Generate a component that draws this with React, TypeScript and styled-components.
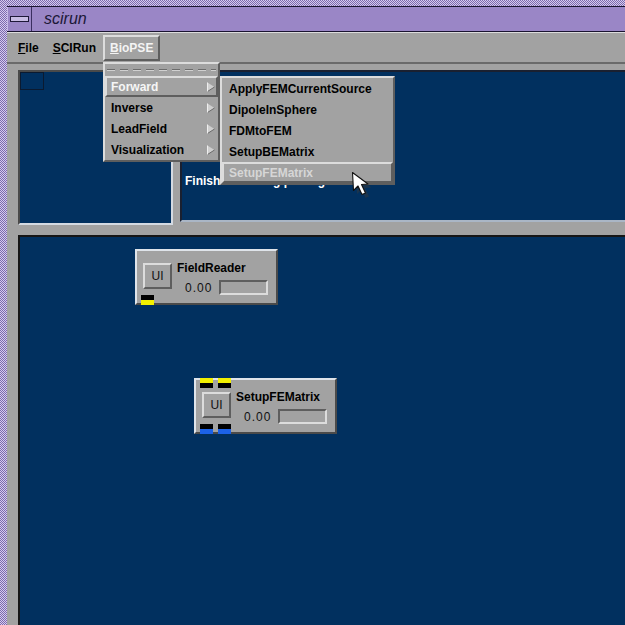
import React from "react";
import styled, { createGlobalStyle, css } from "styled-components";

const GRAY = "#a2a2a2";
const NAVY = "#01305f";
const LIGHT = "#dcdcdc";
const DARK = "#5e5e5e";

const GlobalStyle = createGlobalStyle`
  html, body {
    margin: 0;
    padding: 0;
    background: #8a78b8;
  }
  body {
    font-family: "Liberation Sans", Arial, sans-serif;
  }
`;

const raised = css`
  border-style: solid;
  border-color: ${LIGHT} ${DARK} ${DARK} ${LIGHT};
`;

const sunken = css`
  border-style: solid;
  border-color: ${DARK} ${LIGHT} ${LIGHT} ${DARK};
`;

const Screen = styled.div`
  position: relative;
  width: 625px;
  height: 625px;
  overflow: hidden;
  box-sizing: border-box;
  padding: 6px 0 0 7px;
  display: flex;
  flex-direction: column;
  background: repeating-conic-gradient(#d6cbee 0 25%, #7c6aae 0 50%) 0 0 / 2px 2px;
`;

const TitleBar = styled.div`
  height: 26px;
  box-sizing: border-box;
  display: flex;
  align-items: stretch;
  background: #9a86c6;
  border-top: 1px solid #1a1430;
  border-bottom: 1px solid #1a1430;
`;

const MinBox = styled.div`
  width: 25px;
  display: flex;
  align-items: center;
  justify-content: center;
  border-left: 1px solid #c4b8e2;
  border-right: 1px solid #3a2e60;
  box-sizing: border-box;
`;

const MinBar = styled.div`
  width: 17px;
  height: 4px;
  border: 1px solid #1e1838;
  background: #c8bce4;
`;

const Title = styled.div`
  margin-left: 12px;
  align-self: center;
  font-size: 16px;
  font-style: italic;
  color: #1c1838;
`;

const Window = styled.div`
  flex: 1;
  display: flex;
  flex-direction: column;
  background: ${GRAY};
  min-height: 0;
`;

const MenuBar = styled.div`
  height: 32px;
  box-sizing: border-box;
  display: flex;
  align-items: center;
  padding-left: 4px;
  border-top: 1px solid ${LIGHT};
  border-bottom: 2px solid #6a6a6a;
`;

const MenuButton = styled.div<{ $active?: boolean }>`
  height: 26px;
  box-sizing: border-box;
  display: flex;
  align-items: center;
  padding: 0 5px;
  border-width: 2px;
  font-size: 12px;
  font-weight: bold;
  color: ${(p) => (p.$active ? "#f4f4f4" : "#000")};
  ${(p) =>
    p.$active
      ? raised
      : css`
          border-style: solid;
          border-color: transparent;
        `}
`;

const PanelRow = styled.div`
  display: flex;
  align-items: flex-start;
  gap: 7px;
  margin-top: 6px;
  padding-left: 11px;
`;

const LeftPanel = styled.div`
  width: 155px;
  height: 155px;
  box-sizing: border-box;
  border-width: 2px;
  ${sunken};
  border-color: #4a4a4a #d4dae2 #d4dae2 #4a4a4a;
  background: ${NAVY};
`;

const Thumb = styled.div`
  width: 24px;
  height: 18px;
  box-sizing: border-box;
  border: 1px solid #0b1a30;
`;

const RightPanel = styled.div`
  flex: 1;
  height: 152px;
  box-sizing: border-box;
  border-width: 2px;
  ${sunken};
  border-color: #1a2030 #aab6c6 #aab6c6 #1a2030;
  border-right: none;
  background: ${NAVY};
  padding: 102px 3px 0;
`;

const StatusText = styled.div`
  font-size: 12px;
  font-weight: bold;
  line-height: 14px;
  color: #fff;
`;

const Canvas = styled.div`
  position: relative;
  flex: 1;
  margin: 10px 0 0 11px;
  border-top: 2px solid #161616;
  border-left: 2px solid #161616;
  background: ${NAVY};
`;

const Dropdown = styled.div<{ $left: number; $top: number; $width: number }>`
  position: absolute;
  left: ${(p) => p.$left}px;
  top: ${(p) => p.$top}px;
  width: ${(p) => p.$width}px;
  box-sizing: border-box;
  background: ${GRAY};
  border-width: 2px;
  ${raised};
  display: flex;
  flex-direction: column;
`;

const TearOff = styled.div`
  height: 12px;
  display: flex;
  flex-direction: column;
  justify-content: center;
  padding: 0 2px;
  &::before {
    content: "";
    height: 1px;
    background: repeating-linear-gradient(to right, #6c6c6c 0 8px, transparent 8px 13px);
  }
  &::after {
    content: "";
    height: 1px;
    background: repeating-linear-gradient(to right, #d0d0d0 0 8px, transparent 8px 13px);
  }
`;

const MenuItem = styled.div<{ $active?: boolean; $pad: number; $hi?: string }>`
  height: 21px;
  box-sizing: border-box;
  display: flex;
  align-items: center;
  justify-content: space-between;
  padding: 0 1px 0 ${(p) => p.$pad}px;
  border-width: 2px;
  font-size: 12px;
  font-weight: bold;
  color: ${(p) => (p.$active ? p.$hi || "#f6f6f6" : "#000")};
  ${(p) =>
    p.$active
      ? raised
      : css`
          border-style: solid;
          border-color: transparent;
        `}
`;

const Arrow = () => (
  <svg width="8" height="10" viewBox="0 0 8 10">
    <path d="M0.5 0.5 L7.5 5 L0.5 9.5 Z" fill="#cfcfcf" />
    <path d="M0.5 9.5 L7.5 5" stroke="#6a6a6a" strokeWidth="1" />
    <path d="M0.5 0.5 L0.5 9.5" stroke="#eeeeee" strokeWidth="1" />
  </svg>
);

const Cursor = styled.svg`
  position: absolute;
  left: 350px;
  top: 170px;
`;

const Module = styled.div<{ $left: number; $top: number }>`
  position: absolute;
  left: ${(p) => p.$left}px;
  top: ${(p) => p.$top}px;
  width: 143px;
  box-sizing: border-box;
  background: ${GRAY};
  border-width: 2px;
  ${raised};
  border-color: #dfe4ea #4a4a4a #4a4a4a #dfe4ea;
  padding: 10px 6px 8px;
  display: flex;
  align-items: flex-start;
  gap: 5px;
`;

const UIButton = styled.div`
  width: 29px;
  height: 26px;
  margin-top: 2px;
  box-sizing: border-box;
  border-width: 2px;
  ${raised};
  display: flex;
  align-items: center;
  justify-content: center;
  font-size: 12px;
  color: #111;
`;

const ModuleInfo = styled.div`
  display: flex;
  flex-direction: column;
`;

const ModuleName = styled.div`
  font-size: 12px;
  font-weight: bold;
  line-height: 14px;
  color: #000;
`;

const ValueRow = styled.div`
  display: flex;
  align-items: center;
  gap: 7px;
  margin-top: 5px;
  padding-left: 8px;
`;

const Value = styled.div`
  width: 27px;
  font-size: 12px;
  letter-spacing: 1px;
  color: #111;
`;

const Progress = styled.div`
  width: 49px;
  height: 15px;
  box-sizing: border-box;
  border-width: 2px;
  ${sunken};
`;

const Port = styled.div<{ $x: number; $edge: "top" | "bottom"; $color: string }>`
  position: absolute;
  left: ${(p) => p.$x}px;
  ${(p) => (p.$edge === "top" ? "top: -2px;" : "bottom: -2px;")}
  width: 13px;
  height: 10px;
  display: flex;
  flex-direction: ${(p) => (p.$edge === "top" ? "column" : "column-reverse")};
  &::before {
    content: "";
    height: 5px;
    background: ${(p) => p.$color};
  }
  &::after {
    content: "";
    height: 5px;
    background: #000;
  }
`;

const bioItems = ["Forward", "Inverse", "LeadField", "Visualization"];
const forwardItems = [
  "ApplyFEMCurrentSource",
  "DipoleInSphere",
  "FDMtoFEM",
  "SetupBEMatrix",
  "SetupFEMatrix",
];

export default function App() {
  return (
    <>
      <GlobalStyle />
      <Screen>
        <TitleBar>
          <MinBox>
            <MinBar />
          </MinBox>
          <Title>scirun</Title>
        </TitleBar>
        <Window>
          <MenuBar>
            <MenuButton>
              <span>
                <u>F</u>ile
              </span>
            </MenuButton>
            <MenuButton>
              <span>
                <u>S</u>CIRun
              </span>
            </MenuButton>
            <MenuButton $active>
              <span>
                <u>B</u>ioPSE
              </span>
            </MenuButton>
          </MenuBar>
          <PanelRow>
            <LeftPanel>
              <Thumb />
            </LeftPanel>
            <RightPanel>
              <StatusText>Finished loading packages</StatusText>
            </RightPanel>
          </PanelRow>
          <Canvas>
            <Module $left={115} $top={12}>
              <UIButton>UI</UIButton>
              <ModuleInfo>
                <ModuleName>FieldReader</ModuleName>
                <ValueRow>
                  <Value>0.00</Value>
                  <Progress />
                </ValueRow>
              </ModuleInfo>
              <Port $x={4} $edge="bottom" $color="#f2f000" />
            </Module>
            <Module $left={174} $top={141}>
              <UIButton>UI</UIButton>
              <ModuleInfo>
                <ModuleName>SetupFEMatrix</ModuleName>
                <ValueRow>
                  <Value>0.00</Value>
                  <Progress />
                </ValueRow>
              </ModuleInfo>
              <Port $x={4} $edge="top" $color="#f2f000" />
              <Port $x={22} $edge="top" $color="#f2f000" />
              <Port $x={4} $edge="bottom" $color="#1c62e8" />
              <Port $x={22} $edge="bottom" $color="#1c62e8" />
            </Module>
          </Canvas>
        </Window>

        <Dropdown $left={103} $top={62} $width={117}>
          <TearOff />
          {bioItems.map((name, i) => (
            <MenuItem key={name} $active={i === 0} $pad={4}>
              <span>{name}</span>
              <Arrow />
            </MenuItem>
          ))}
        </Dropdown>

        <Dropdown $left={220} $top={76} $width={175}>
          {forwardItems.map((name, i) => (
            <MenuItem key={name} $active={i === 4} $pad={5} $hi="#d6d6d6">
              <span>{name}</span>
            </MenuItem>
          ))}
        </Dropdown>

        <Cursor width="24" height="30" viewBox="0 0 24 30">
          <path
            d="M4 4 L5 22 L9.5 17.5 L13.5 26 L17 24.5 L13 16 L19.5 15.5 Z"
            fill="#3a3a3a"
            opacity="0.45"
            transform="translate(2 2)"
          />
          <path
            d="M2.5 2.5 L3.5 20.5 L8 16 L12 24.5 L15.5 23 L11.5 14.5 L18 14 Z"
            fill="#ffffff"
            stroke="#111111"
            strokeWidth="1.1"
            strokeLinejoin="round"
          />
        </Cursor>
      </Screen>
    </>
  );
}
